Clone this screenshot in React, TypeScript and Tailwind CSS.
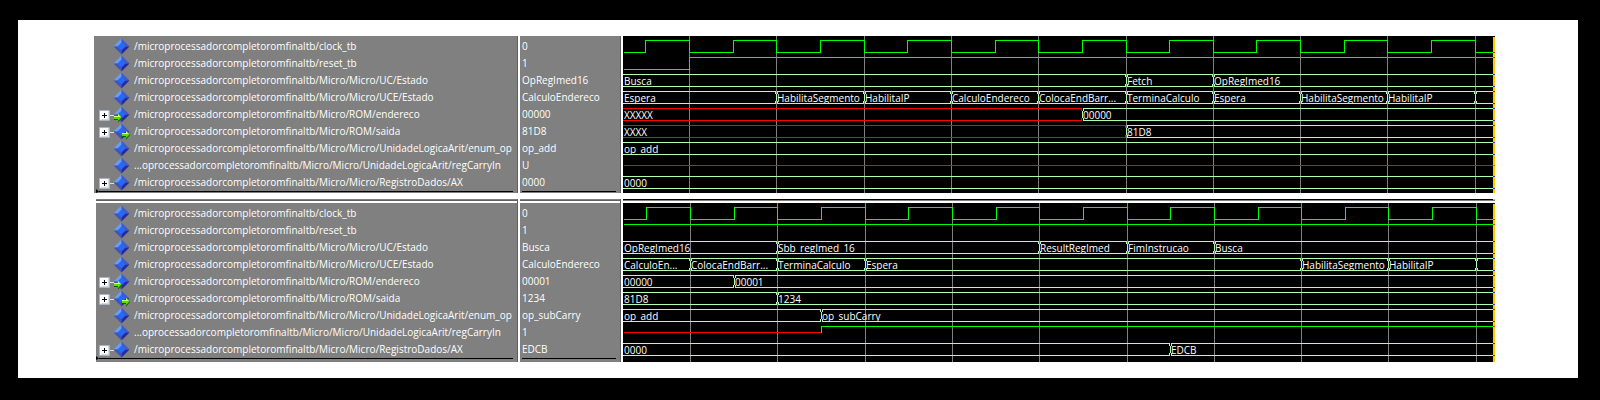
import React from "react";

type Tone = "bus" | "logic" | "unknown";

// A bus holds labelled values; a scalar is a stepped line of levels.
type Segment = { at: number; text: string; tone?: Tone };
type Level = "high" | "low" | "mid";
type Step = { at: number; level: Level; tone?: Tone };

type Signal = {
  name: string;
  value: string;
  port?: "in" | "out";
  expandable?: boolean;
  bus?: Segment[];
  steps?: Step[];
};

type Capture = { id: string; grid: number[]; signals: Signal[] };

const ROW = 17;
const TOP = 2;
const HEIGHT = { high: 2, mid: 8, low: 14 };
const FILL: Record<Tone, string> = {
  bus: "fill-[#b0ffb0]",
  logic: "fill-[#00ff00]",
  unknown: "fill-[#ff0000]",
};
const CROSSING: Record<Tone, string> = {
  bus: "fill-[#5030c0]",
  logic: "fill-[#ff3000]",
  unknown: "fill-[#00d030]",
};

const root = "/microprocessadorcompletoromfinaltb";

function clock(rises: number[], falls: number[]): Step[] {
  const steps: Step[] = [{ at: 1, level: "low" }];
  rises.forEach((at, i) => {
    steps.push({ at, level: "high" }, { at: falls[i], level: "low" });
  });
  return steps;
}

const gridA = [66, 153, 241, 328, 415, 503, 590, 677, 764, 852];
const risesA = [22, 110, 197, 284, 372, 459, 546, 633, 721, 808];
const gridB = [67, 154, 242, 329, 416, 504, 591, 678, 765, 853];
const risesB = [23, 111, 198, 285, 373, 460, 547, 635, 722, 809];

const captures: Capture[] = [
  {
    id: "a",
    grid: gridA,
    signals: [
      { name: `${root}/clock_tb`, value: "0", steps: clock(risesA, gridA) },
      {
        name: `${root}/reset_tb`,
        value: "1",
        steps: [{ at: 1, level: "low" }, { at: 66, level: "high" }],
      },
      {
        name: `${root}/Micro/Micro/UC/Estado`,
        value: "OpRegImed16",
        bus: [
          { at: 0, text: "Busca" },
          { at: 503, text: "Fetch" },
          { at: 590, text: "OpRegImed16" },
        ],
      },
      {
        name: `${root}/Micro/Micro/UCE/Estado`,
        value: "CalculoEndereco",
        bus: [
          { at: 0, text: "Espera" },
          { at: 153, text: "HabilitaSegmento" },
          { at: 241, text: "HabilitaIP" },
          { at: 328, text: "CalculoEndereco" },
          { at: 415, text: "ColocaEndBarr..." },
          { at: 503, text: "TerminaCalculo" },
          { at: 590, text: "Espera" },
          { at: 677, text: "HabilitaSegmento" },
          { at: 764, text: "HabilitaIP" },
          { at: 852, text: "" },
        ],
      },
      {
        name: `${root}/Micro/ROM/endereco`,
        value: "00000",
        port: "in",
        expandable: true,
        bus: [
          { at: 0, text: "XXXXX", tone: "unknown" },
          { at: 459, text: "00000" },
        ],
      },
      {
        name: `${root}/Micro/ROM/saida`,
        value: "81D8",
        port: "out",
        expandable: true,
        bus: [
          { at: 0, text: "XXXX", tone: "unknown" },
          { at: 503, text: "81D8" },
        ],
      },
      {
        name: `${root}/Micro/Micro/UnidadeLogicaArit/enum_op`,
        value: "op_add",
        bus: [{ at: 0, text: "op_add" }],
      },
      {
        name: "...oprocessadorcompletoromfinaltb/Micro/Micro/UnidadeLogicaArit/regCarryIn",
        value: "U",
        steps: [{ at: 1, level: "mid", tone: "unknown" }],
      },
      {
        name: `${root}/Micro/Micro/RegistroDados/AX`,
        value: "0000",
        expandable: true,
        bus: [{ at: 0, text: "0000" }],
      },
    ],
  },
  {
    id: "b",
    grid: gridB,
    signals: [
      { name: `${root}/clock_tb`, value: "0", steps: clock(risesB, gridB) },
      { name: `${root}/reset_tb`, value: "1", steps: [{ at: 1, level: "high" }] },
      {
        name: `${root}/Micro/Micro/UC/Estado`,
        value: "Busca",
        bus: [
          { at: 0, text: "OpRegImed16" },
          { at: 154, text: "Sbb_regImed_16" },
          { at: 416, text: "ResultRegImed" },
          { at: 504, text: "FimInstrucao" },
          { at: 591, text: "Busca" },
        ],
      },
      {
        name: `${root}/Micro/Micro/UCE/Estado`,
        value: "CalculoEndereco",
        bus: [
          { at: 0, text: "CalculoEn..." },
          { at: 67, text: "ColocaEndBarr..." },
          { at: 154, text: "TerminaCalculo" },
          { at: 242, text: "Espera" },
          { at: 678, text: "HabilitaSegmento" },
          { at: 765, text: "HabilitaIP" },
          { at: 853, text: "" },
        ],
      },
      {
        name: `${root}/Micro/ROM/endereco`,
        value: "00001",
        port: "in",
        expandable: true,
        bus: [
          { at: 0, text: "00000" },
          { at: 111, text: "00001" },
        ],
      },
      {
        name: `${root}/Micro/ROM/saida`,
        value: "1234",
        port: "out",
        expandable: true,
        bus: [
          { at: 0, text: "81D8" },
          { at: 154, text: "1234" },
        ],
      },
      {
        name: `${root}/Micro/Micro/UnidadeLogicaArit/enum_op`,
        value: "op_subCarry",
        bus: [
          { at: 0, text: "op_add" },
          { at: 198, text: "op_subCarry" },
        ],
      },
      {
        name: "...oprocessadorcompletoromfinaltb/Micro/Micro/UnidadeLogicaArit/regCarryIn",
        value: "1",
        steps: [
          { at: 1, level: "mid", tone: "unknown" },
          { at: 198, level: "high" },
        ],
      },
      {
        name: `${root}/Micro/Micro/RegistroDados/AX`,
        value: "EDCB",
        expandable: true,
        bus: [
          { at: 0, text: "0000" },
          { at: 547, text: "EDCB" },
        ],
      },
    ],
  },
];

function SignalIcon({ port }: { port?: "in" | "out" }) {
  const shift = port === "in" ? 0 : 8;
  return (
    <svg width="16" height="17" viewBox="0 0 16 17" className="shrink-0" aria-hidden="true">
      <path d="M7.5 0.5 L-0.5 8.5 H7.5Z" fill="#6c9cf4" />
      <path d="M7.5 0.5 L15.5 8.5 H7.5Z" fill="#3c5ccc" />
      <path d="M-0.5 8.5 L7.5 16.5 V8.5Z" fill="#3c54bc" />
      <path d="M15.5 8.5 L7.5 16.5 V8.5Z" fill="#28289c" />
      <path d="M7.5 4.5 L11.5 8.5 L7.5 12.5 L3.5 8.5Z" fill="#2468fc" />
      {port && (
        <g transform={`translate(${shift} 0)`}>
          <path d="M0 11h4v-3l4 4-4 4.5v-2.500H0Z" fill="#085808" />
          <path d="M0 10h4v-2l3.500 3.500-3.500 3.500v-2H0Z" fill="#58e000" />
          <path d="M0 10h4v-2l3 3H0Z" fill="#d8ff70" />
        </g>
      )}
    </svg>
  );
}

function ExpandButton({ label }: { label: string }) {
  return (
    <button type="button" aria-label={`Expandir ${label}`} className="flex h-[17px] w-full items-end pb-px">
      <svg width="15" height="12" viewBox="0 0 15 12" className="block" aria-hidden="true">
        <rect x="0" y="0" width="11" height="11" rx="1" fill="#a8b4c8" />
        <rect x="1" y="1" width="9" height="9" fill="#fafcff" />
        <path d="M10 1v9H1l2-1h5l1-1V1Z" fill="#d4d8e0" />
        <path d="M3 5h5v1H3ZM5 3h1v5H5Z" fill="#000" />
        <rect x="11" y="5" width="4" height="1" fill="#e0e0e0" />
      </svg>
    </button>
  );
}

function BusTrace({ segments }: { segments: Segment[] }) {
  return (
    <>
      {segments.map((s) => (
        <text key={s.at} x={s.at === 0 ? 1 : s.at + 1} y="13" className="fill-white text-[10px]">
          {s.text}
        </text>
      ))}
      {segments.map((s, i) => {
        const next = segments[i + 1];
        const start = i === 0 ? 0 : s.at + 1;
        const width = next ? next.at - start : "100%";
        const fill = FILL[s.tone ?? "bus"];
        return (
          <g key={s.at} className={fill}>
            <rect x={start} y="2" width={width} height="1" />
            <rect x={start} y="14" width={width} height="1" />
            {i > 0 && (
              <>
                <rect x={s.at + 1} y="2" width="1" height="3" />
                <rect x={s.at} y="5" width="1" height="7" />
                <rect x={s.at + 1} y="12" width="1" height="3" />
              </>
            )}
            {next && (
              <>
                <rect x={next.at - 1} y="2" width="1" height="3" />
                <rect x={next.at - 1} y="12" width="1" height="3" />
              </>
            )}
          </g>
        );
      })}
    </>
  );
}

function StepTrace({ steps }: { steps: Step[] }) {
  return (
    <>
      {steps.map((s, i) => {
        const prev = steps[i - 1];
        const next = steps[i + 1];
        const y = HEIGHT[s.level];
        const from = prev ? HEIGHT[prev.level] : y;
        return (
          <g key={s.at} className={FILL[s.tone ?? "logic"]}>
            <rect x={s.at} y={y} width={next ? next.at - s.at : "100%"} height="1" />
            {prev && <rect x={s.at} y={Math.min(y, from)} width="1" height={Math.abs(y - from) + 1} />}
          </g>
        );
      })}
    </>
  );
}

function crossings(signal: Signal): { y: number; tone: Tone }[] {
  if (signal.bus) {
    return [
      { y: HEIGHT.high, tone: "bus" },
      { y: HEIGHT.low, tone: "bus" },
    ];
  }
  const last = signal.steps![signal.steps!.length - 1];
  return [{ y: HEIGHT[last.level], tone: last.tone ?? "logic" }];
}

function Waves({ capture }: { capture: Capture }) {
  return (
    <svg width="100%" height="100%" className="block" shapeRendering="crispEdges">
      {capture.grid.map((x) => (
        <rect key={x} x={x} y="0" width="1" height="100%" className="fill-[#808080]" />
      ))}
      {capture.signals.map((signal, i) => (
        <svg key={signal.name} x="0" y={TOP + i * ROW} width="100%" height="15">
          {signal.bus && <BusTrace segments={signal.bus} />}
          {signal.steps && <StepTrace steps={signal.steps} />}
        </svg>
      ))}
      <svg x="100%" overflow="visible">
        <rect x="-2" y="1" width="2" height="1000" className="fill-[#ffcc00]" />
        {capture.signals.map((signal, i) =>
          crossings(signal).map((c) => (
            <rect
              key={`${signal.name}${c.y}`}
              x="-2"
              y={TOP + i * ROW + c.y}
              width="2"
              height="1"
              className={CROSSING[c.tone]}
            />
          )),
        )}
      </svg>
    </svg>
  );
}

function PaneEdge({ dark }: { dark?: boolean }) {
  return (
    <div aria-hidden="true">
      <div className={dark ? "h-px border-r-2 border-[#ffcc00] bg-black" : "h-px bg-[#808080]"} />
      <div className={dark ? "h-px bg-[#808080]" : "h-px bg-[#606060]"} />
      <div className="h-[2px] bg-white" />
    </div>
  );
}

function WavePanel({ capture, second }: { capture: Capture; second?: boolean }) {
  return (
    <section className={second ? "flex gap-[2px] pl-[2px]" : "flex gap-[2px]"}>
      <div className={second ? "w-[422px] shrink-0 border-r border-[#606060] bg-[#808080]" : "w-[424px] shrink-0 border-r border-[#606060] bg-[#808080]"}>
        {second && <PaneEdge />}
        <ul className="pt-[2px]">
          {capture.signals.map((s) => (
            <li key={s.name} className={second ? "flex h-[17px] pl-[3px]" : "flex h-[17px] pl-[5px]"}>
              <div className="w-[15px] shrink-0">{s.expandable && <ExpandButton label={s.name} />}</div>
              <SignalIcon port={s.port} />
              <span className="whitespace-nowrap pl-1 leading-[17px]">{s.name}</span>
            </li>
          ))}
        </ul>
        <div className={second ? "flex h-1 items-start" : "flex h-[2px] items-start pl-[2px]"}>
          <svg width="3" height="4" viewBox="0 0 3 4" className="-mt-[2px] shrink-0" aria-hidden="true">
            <path d="M0 0L3 2.500L0 4Z" fill="#000" />
          </svg>
          <div className="mr-1 h-px flex-1 bg-black" />
        </div>
      </div>
      <div className="w-[101px] shrink-0 border-r border-[#606060] bg-[#808080]">
        {second && <PaneEdge />}
        <ul className="pt-[2px]">
          {capture.signals.map((s) => (
            <li key={s.name} className="h-[17px] pl-[2px] leading-[17px]">
              {s.value}
            </li>
          ))}
        </ul>
        <div className="ml-[2px] mr-1 h-px bg-black" />
      </div>
      <div className="flex min-w-0 flex-1 flex-col bg-black">
        {second && <PaneEdge dark />}
        <div className="flex-1">
          <Waves capture={capture} />
        </div>
      </div>
    </section>
  );
}

export default function App() {
  return (
    <div className="min-h-screen bg-black pb-[22px] pl-[18px] pr-[22px] pt-5">
      <main className="flex flex-col gap-[6px] bg-white pb-4 pl-[76px] pr-[83px] pt-4 font-['Open_Sans',sans-serif] text-[10px] text-white">
        <WavePanel capture={captures[0]} />
        <WavePanel capture={captures[1]} second />
      </main>
    </div>
  );
}
